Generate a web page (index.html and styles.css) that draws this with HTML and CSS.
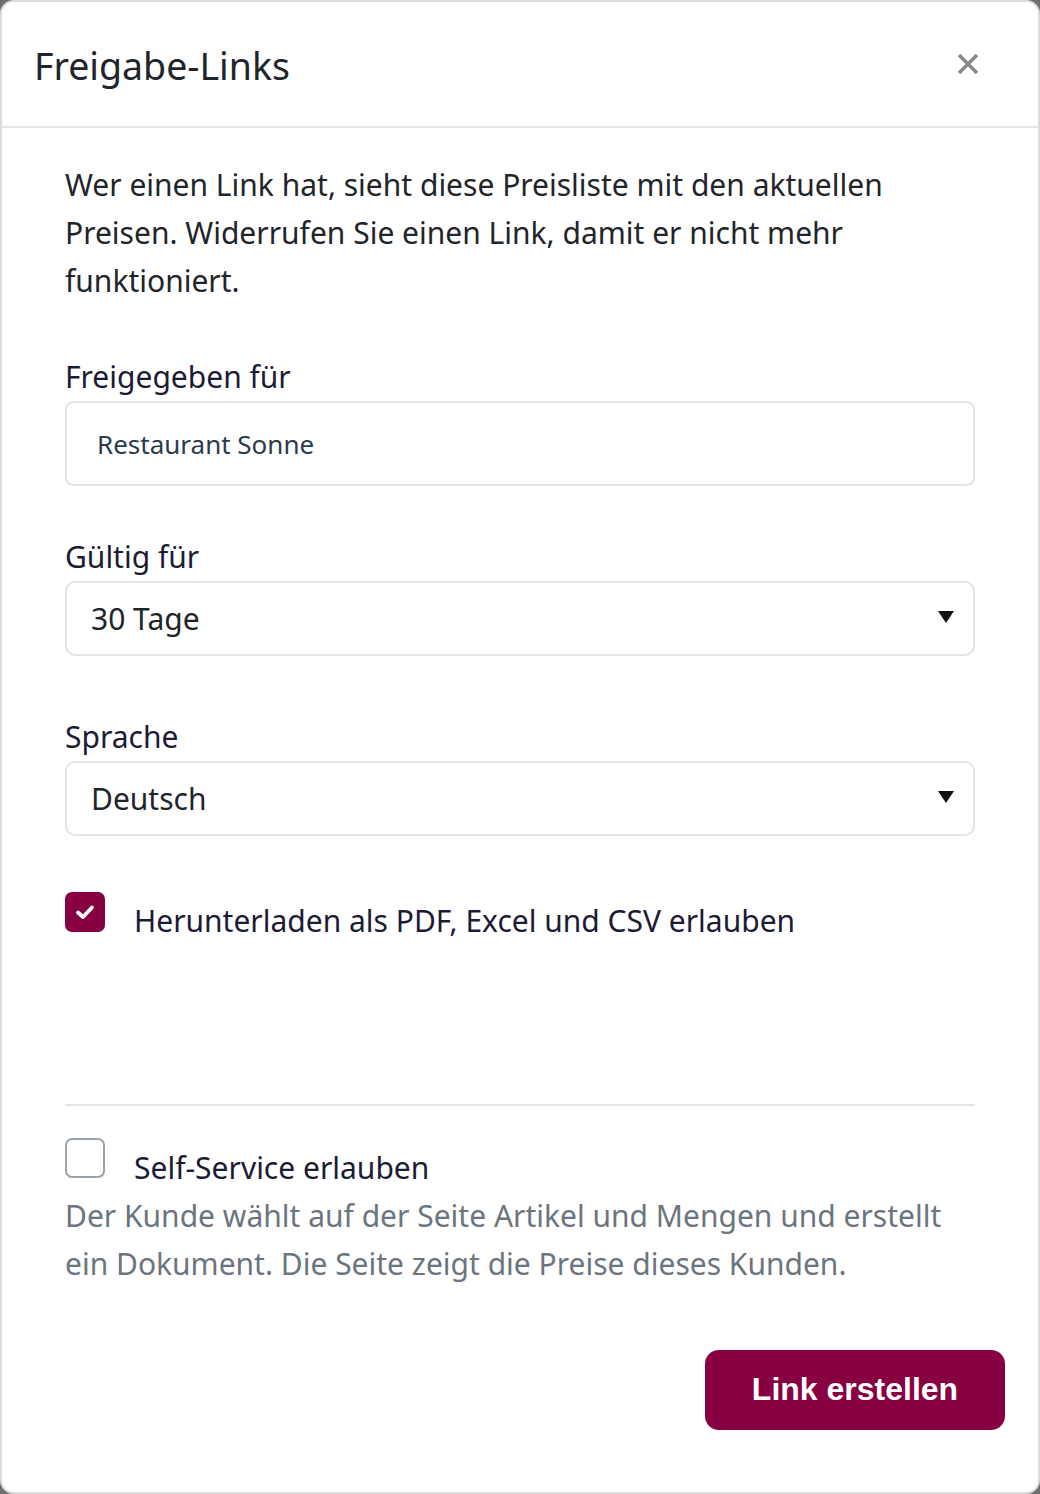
FILE: index.html
```html
<!DOCTYPE html>
<html lang="de">
<head>
<meta charset="utf-8">
<title>Freigabe-Links</title>
<link rel="stylesheet" href="styles.css">
</head>
<body>
<div class="modal">
  <header class="modal-header">
    <h1 class="modal-title">Freigabe-Links</h1>
    <button class="close" type="button" aria-label="Schließen">
      <svg width="24" height="24" viewBox="0 0 24 24"><path d="M3 3 L21 21 M21 3 L3 21" stroke="#8a8a8a" stroke-width="3.6" stroke-linecap="butt" fill="none"/></svg>
    </button>
  </header>
  <main class="modal-body">
    <p class="intro">Wer einen Link hat, sieht diese Preisliste mit den aktuellen<br>Preisen. Widerrufen Sie einen Link, damit er nicht mehr<br>funktioniert.</p>

    <div class="group g1">
      <label class="label">Freigegeben für</label>
      <div class="input">Restaurant Sonne</div>
    </div>

    <div class="group g2">
      <label class="label">Gültig für</label>
      <div class="select"><span>30 Tage</span><span class="caret"></span></div>
    </div>

    <div class="group g3">
      <label class="label">Sprache</label>
      <div class="select"><span>Deutsch</span><span class="caret"></span></div>
    </div>

    <div class="check-row first">
      <span class="box checked">
        <svg width="20" height="16" viewBox="0 0 20 16"><path d="M3 8.5 L8 13 L17 3.5" stroke="#fff" stroke-width="3.8" fill="none" stroke-linecap="round" stroke-linejoin="round"/></svg>
      </span>
      <span class="check-label">Herunterladen als PDF, Excel und CSV erlauben</span>
    </div>

    <hr class="divider">

    <div class="check-row second">
      <span class="box"></span>
      <div class="check-text">
        <span class="check-label">Self-Service erlauben</span>
        <p class="help">Der Kunde wählt auf der Seite Artikel und Mengen und erstellt<br>ein Dokument. Die Seite zeigt die Preise dieses Kunden.</p>
      </div>
    </div>
  </main>
  <footer class="modal-footer">
    <button class="btn" type="button">Link erstellen</button>
  </footer>
</div>
</body>
</html>
```

FILE: styles.css
```css
* { box-sizing: border-box; }
html, body { margin: 0; padding: 0; }
body {
  background: #6f6f6f;
  font-family: "Noto Sans", "Open Sans", sans-serif;
  color: #212529;
}
.modal {
  width: 1040px;
  height: 1494px;
  background: #fff;
  border: 2px solid #dcdcdc;
  border-radius: 14px;
  display: flex;
  flex-direction: column;
  overflow: hidden;
}
.modal-header {
  height: 126px;
  flex: none;
  border-bottom: 2px solid #e4e4e4;
  display: flex;
  align-items: center;
  justify-content: space-between;
  padding: 0 58px 0 32px;
}
.modal-title {
  margin: 0;
  font-weight: 400;
  font-size: 37.5px;
  color: #212529;
  line-height: 1.2;
  position: relative;
  top: 1px;
}
.close {
  border: 0;
  background: none;
  padding: 0;
  width: 24px;
  height: 24px;
  display: flex;
}
.modal-body {
  flex: 1;
  padding: 33px 63px 0 63px;
}
.intro {
  margin: 0;
  font-size: 30px;
  line-height: 48px;
  color: #212529;
}
.group { display: flex; flex-direction: column; }
.g1 { margin-top: 50px; }
.g2 { margin-top: 49px; }
.g3 { margin-top: 59px; }
.label {
  font-size: 30px;
  line-height: 44px;
  color: #1c1b33;
  margin-bottom: 2px;
}
.input {
  height: 85px;
  border: 2px solid #e3e3e8;
  border-radius: 8px;
  padding: 0 30px;
  display: flex;
  align-items: center;
  font-size: 26px;
  color: #2c3a4b;
}
.select {
  height: 75px;
  border: 2px solid #e3e3e8;
  border-radius: 10px;
  padding: 0 19px 0 24px;
  display: flex;
  align-items: center;
  justify-content: space-between;
  font-size: 30px;
  color: #212529;
}
.caret {
  width: 0;
  height: 0;
  border-left: 8px solid transparent;
  border-right: 8px solid transparent;
  border-top: 12px solid #111;
  margin-top: -4px;
}
.check-row {
  display: flex;
  align-items: flex-start;
  gap: 29px;
}
.check-row.first { margin-top: 56px; }
.box {
  flex: none;
  width: 40px;
  height: 40px;
  border-radius: 7px;
  border: 2px solid #9ba3aa;
  background: #fff;
  display: flex;
  align-items: center;
  justify-content: center;
}
.box.checked {
  background: #870042;
  border-color: #870042;
}
.check-label {
  display: block;
  margin-top: 5px;
  font-size: 30px;
  line-height: 48px;
  color: #1c1b33;
}
.check-text { display: flex; flex-direction: column; }
.check-text .check-label { margin-top: 6px; }
.check-text .help { margin-left: -69px; }
.divider {
  margin: 159px 0 0 0;
  border: 0;
  border-top: 2px solid #e4e4e4;
  height: 0;
}
.check-row.second { margin-top: 32px; }
.help {
  margin: 0;
  font-size: 30px;
  line-height: 48px;
  color: #6c757d;
}
.modal-footer {
  flex: none;
  display: flex;
  justify-content: flex-end;
  padding: 0 33px 62px 0;
}
.btn {
  width: 300px;
  height: 80px;
  border: 0;
  border-radius: 14px;
  background: #870042;
  color: #fff;
  font-family: "Liberation Sans", Arial, sans-serif;
  font-weight: 700;
  font-size: 32px;
  padding: 0 0 2px 0;
}
```
